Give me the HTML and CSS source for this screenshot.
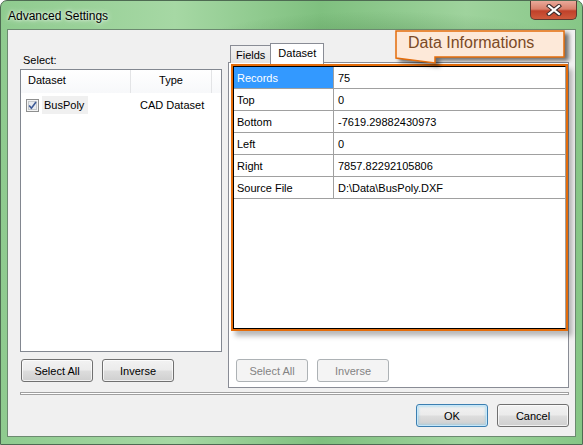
FILE: index.html
```html
<!DOCTYPE html>
<html>
<head>
<meta charset="utf-8">
<link rel="stylesheet" href="styles.css">
</head>
<body>
<div class="window">
  <div class="titlebar">
    <span class="title">Advanced Settings</span>
    <div class="close">
      <svg width="16" height="12" viewBox="0 0 16 12">
        <path d="M3 2 L13 10 M13 2 L3 10" stroke="#3a2a2a" stroke-width="4.2" stroke-linecap="square"/>
        <path d="M3 2 L13 10 M13 2 L3 10" stroke="#ffffff" stroke-width="2.2" stroke-linecap="square"/>
      </svg>
    </div>
  </div>
  <div class="client">
    <div class="main">
      <div class="left">
        <div class="label">Select:</div>
        <div class="listbox">
          <div class="lv-head">
            <div class="hcol h1">Dataset</div>
            <div class="hcol h2">Type</div>
            <div class="hcol h3"></div>
          </div>
          <div class="lv-row">
            <span class="chk">
              <svg width="13" height="13" viewBox="0 0 13 13">
                <rect x="0.5" y="0.5" width="12" height="12" fill="#f4f4f4" stroke="#8e8f8f"/>
                <rect x="2.5" y="2.5" width="8" height="8" fill="#e8ebef" stroke="#c4c8cc"/>
                <path d="M3.2 6.4 L5.4 9.2 L10 3" fill="none" stroke="#3d5a96" stroke-width="1.6"/>
              </svg>
            </span>
            <span class="name">BusPoly</span>
            <span class="type">CAD Dataset</span>
          </div>
        </div>
        <div class="btnrow">
          <button class="btn first">Select All</button>
          <button class="btn">Inverse</button>
        </div>
      </div>
      <div class="right">
        <div class="tabs">
          <div class="tab">Fields</div>
          <div class="tab active">Dataset</div>
        </div>
        <div class="panel">
          <div class="grid-frame">
            <div class="grid">
              <div class="row"><div class="k sel">Records</div><div class="v">75</div></div>
              <div class="row"><div class="k">Top</div><div class="v">0</div></div>
              <div class="row"><div class="k">Bottom</div><div class="v">-7619.29882430973</div></div>
              <div class="row"><div class="k">Left</div><div class="v">0</div></div>
              <div class="row"><div class="k">Right</div><div class="v">7857.82292105806</div></div>
              <div class="row"><div class="k">Source File</div><div class="v">D:\Data\BusPoly.DXF</div></div>
            </div>
          </div>
          <div class="btnrow">
            <button class="btn" disabled>Select All</button>
            <button class="btn" disabled>Inverse</button>
          </div>
        </div>
        <div class="callout">
          <svg class="callout-shape" width="176" height="40" viewBox="0 0 176 40">
            <path d="M1 1 H169 V27 H40 V33 L1 28 Z" fill="#fde9d9" stroke="#e46c0a" stroke-width="1.5"/>
          </svg>
          <span class="callout-text">Data Informations</span>
        </div>
      </div>
    </div>
    <div class="sep"></div>
    <div class="footer">
      <button class="btn ok">OK</button>
      <button class="btn">Cancel</button>
    </div>
  </div>
</div>
</body>
</html>
```

FILE: styles.css
```css
* { box-sizing: border-box; }
html, body {
  margin: 0;
  padding: 0;
  width: 583px;
  height: 445px;
  overflow: hidden;
  background: #ffffff;
}
body {
  font-family: "Liberation Sans", Arial, sans-serif;
  font-size: 11px;
  color: #000;
}
.window {
  width: 583px;
  height: 445px;
  border: 1px solid #4e6b52;
  border-radius: 7px 7px 0 0;
  background:
    radial-gradient(ellipse 180px 30px at 380px 40px, rgba(60,120,60,0.35), transparent),
    linear-gradient(90deg, #8fcb8f 0%, #a6d8a4 30%, #7fc07f 55%, #9fd39d 80%, #86c686 100%);
  display: flex;
  flex-direction: column;
}
.titlebar {
  height: 28px;
  display: flex;
  align-items: flex-start;
  justify-content: space-between;
  padding-left: 7px;
}
.title {
  margin-top: 8px;
  font-size: 12px;
  color: #000;
  text-shadow: 0 0 6px rgba(255,255,255,0.9), 0 0 3px rgba(255,255,255,0.9);
}
.close {
  width: 47px;
  height: 19px;
  margin-right: 5px;
  border: 1px solid #5b3a33;
  border-top: none;
  border-radius: 0 0 5px 5px;
  background: linear-gradient(#e9a99a 0%, #d9806c 45%, #c0412a 55%, #cf5a3c 100%);
  display: flex;
  align-items: center;
  justify-content: center;
}
.client {
  flex: 1;
  margin: 0 6px 7px 6px;
  border: 1px solid #6c8a70;
  background: #f0f0f0;
  padding: 13px 6px 0 12px;
  display: flex;
  flex-direction: column;
}
.main {
  display: flex;
  gap: 6px;
}
.left {
  width: 202px;
  display: flex;
  flex-direction: column;
}
.label {
  padding-top: 10px;
  height: 26px;
  line-height: 14px;
  padding-left: 3px;
}
.listbox {
  height: 283px;
  border: 1px solid #828790;
  background: #fff;
}
.lv-head {
  display: flex;
  height: 23px;
  background: linear-gradient(#ffffff, #f7f8fa);
}
.hcol {
  line-height: 21px;
  border-right: 1px solid #e3e4e6;
}
.h1 { width: 110px; padding-left: 7px; }
.h2 { width: 81px; text-align: center; }
.h3 { flex: 1; border-right: none; }
.lv-row {
  display: flex;
  align-items: center;
  height: 20px;
  margin-top: 2px;
}
.chk {
  width: 13px;
  height: 13px;
  margin-left: 5px;
  display: flex;
}
.chk svg { display: block; }
.name {
  margin-left: 3px;
  width: 46px;
  height: 18px;
  line-height: 18px;
  padding-left: 2px;
  background: #f0f0f0;
}
.type {
  margin-left: 52px;
}
.btnrow {
  display: flex;
  gap: 9px;
  margin-top: 7px;
}
.btn.first { margin-left: 1px; }
.btn {
  font-family: "Liberation Sans", Arial, sans-serif;
  font-size: 11px;
  color: #000;
  width: 72px;
  height: 23px;
  padding: 0;
  border: 1px solid #707070;
  border-radius: 3px;
  background: linear-gradient(#f2f2f2 0%, #ebebeb 48%, #dddddd 52%, #cfcfcf 100%);
  box-shadow: inset 0 0 0 1px rgba(255,255,255,0.7);
}
.btn:disabled {
  color: #838383;
  border-color: #adb2b5;
  background: #f4f4f4;
  box-shadow: none;
}
.right {
  width: 341px;
  position: relative;
  display: flex;
  flex-direction: column;
}
.tabs {
  display: flex;
  align-items: flex-end;
  height: 20px;
  padding-left: 2px;
  position: relative;
  z-index: 1;
}
.tab {
  height: 18px;
  line-height: 18px;
  padding: 0 5px;
  border: 1px solid #898c95;
  border-bottom: none;
  background: linear-gradient(#f2f2f2, #e3e3e3);
}
.tab.active {
  height: 21px;
  margin-bottom: -1px;
  line-height: 18px;
  background: #ffffff;
  padding: 0 7px;
  margin-left: -1px;
}
.panel {
  height: 326px;
  margin-top: -1px;
  border: 1px solid #898c95;
  background: #ffffff;
  padding: 1px 0 0 2px;
  display: flex;
  flex-direction: column;
}
.grid-frame {
  height: 267px;
  border: 2px solid #e46c0a;
  box-shadow: 4px 5px 5px rgba(0,0,0,0.28);
  background: #fff;
}
.grid {
  height: 100%;
  border: 1px solid #000;
  border-right-color: #a0a0a0;
}
.row {
  display: flex;
  height: 22px;
  border-bottom: 1px solid #a0a0a0;
}
.k {
  width: 100px;
  border-right: 1px solid #a0a0a0;
  padding-left: 3px;
  padding-top: 2px;
  line-height: 19px;
}
.k.sel {
  background: #3399ff;
  color: #fff;
}
.v {
  flex: 1;
  padding-left: 4px;
  padding-top: 2px;
  line-height: 19px;
}
.panel .btnrow {
  margin-top: 28px;
  padding-left: 5px;
}
.callout {
  position: absolute;
  left: 167px;
  top: -13px;
  width: 176px;
  height: 40px;
  z-index: 2;
}
.callout-shape {
  position: absolute;
  left: 0;
  top: 0;
  filter: drop-shadow(4px 3px 2px rgba(0,0,0,0.55));
}
.callout-text {
  position: absolute;
  left: 13px;
  top: 4px;
  font-size: 16px;
  color: #7b4a26;
}
.sep {
  margin-top: 4px;
  height: 3px;
  width: 549px;
  border: 1px solid #a0a0a0;
  background: #fff;
}
.footer {
  display: flex;
  justify-content: flex-end;
  gap: 9px;
  margin-top: 9px;
  width: 549px;
}
.btn.ok {
  border-color: #3c7fb1;
  box-shadow: inset 0 0 0 1px #c6e7f9, inset 0 0 2px 2px rgba(120,200,240,0.4);
}
```
